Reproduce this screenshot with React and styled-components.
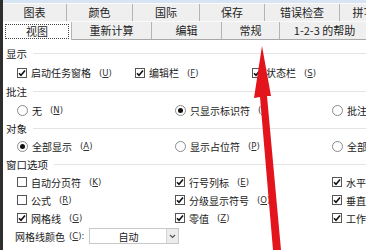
import React from "react";
import styled, { createGlobalStyle } from "styled-components";

const Global = createGlobalStyle`
  html, body { margin: 0; padding: 0; background: #fff; }
  body { font-family: "Noto Sans CJK SC", "Noto Sans", sans-serif; color: #1a1a1a; }
`;

const Window = styled.div`
  position: relative;
  display: flex;
  width: 366px;
  height: 250px;
  overflow: hidden;
  background: #fff;
`;

const LeftFrame = styled.div`
  width: 3px;
  flex: none;
  background: #2e2e2e;
`;

const Main = styled.div`
  flex: 1;
  display: flex;
  flex-direction: column;
  min-width: 0;
`;

const TopStrip = styled.div`
  height: 3px;
  background: #d6e4f3;
  border-bottom: 1px solid #fbfbfb;
`;

const TabRow = styled.div`
  display: flex;
  height: 18px;
  background: #efefef;
  border-bottom: 1px solid ${(p) => (p.$last ? "#a8a8a8" : "#fafafa")};
  box-sizing: border-box;
  white-space: nowrap;
`;

const Tab = styled.div`
  flex: none;
  width: ${(p) => p.$w}px;
  box-sizing: border-box;
  display: flex;
  align-items: center;
  justify-content: center;
  font-size: 11px;
  line-height: 1;
  color: #222;
  border-right: 1px solid #b4b4b4;
  background: ${(p) => (p.$active ? "#fff" : "transparent")};
  margin-bottom: ${(p) => (p.$active ? "-1px" : "0")};
  padding: ${(p) => (p.$active ? "0 2px" : "0")};
`;

const Focus = styled.span`
  flex: 1;
  align-self: stretch;
  margin: 2px 0 1px;
  border: 1px dotted #444;
  display: flex;
  align-items: center;
  justify-content: center;
`;

const Content = styled.div`
  display: flex;
  flex-direction: column;
  padding-top: 4px;
`;

const Section = styled.div`
  display: flex;
  align-items: center;
  height: ${(p) => p.$h}px;
  padding-left: 3px;
  font-size: 10.5px;
  color: #1a1a1a;
  &::after {
    content: "";
    flex: 1;
    height: 1px;
    margin-left: 6px;
    background: #e4e4e4;
  }
`;

const Row = styled.div`
  display: grid;
  grid-template-columns: ${(p) => p.$cols};
  align-items: center;
  height: ${(p) => p.$h}px;
  padding-left: 14px;
  white-space: nowrap;
`;

const Option = styled.label`
  display: flex;
  align-items: center;
  gap: 4px;
  font-size: 10px;
  color: #1a1a1a;
  overflow: hidden;
`;

const Key = styled.span`
  font-family: "DejaVu Sans", sans-serif;
  font-size: 8.5px;
  margin-left: 4px;
  color: #333;
  u { text-decoration: underline; }
`;

const Box = styled.span`
  flex: none;
  width: 10px;
  height: 10px;
  box-sizing: border-box;
  border: 1px solid #555;
  background: #fff;
  display: flex;
  align-items: center;
  justify-content: center;
`;

const Radio = styled.span`
  flex: none;
  width: 11px;
  height: 11px;
  box-sizing: border-box;
  border: 1px solid #8a8a8a;
  border-radius: 50%;
  background: #fff;
  display: flex;
  align-items: center;
  justify-content: center;
  &::after {
    content: "";
    width: 5px;
    height: 5px;
    border-radius: 50%;
    background: ${(p) => (p.$on ? "#111" : "transparent")};
  }
`;

const ColorRow = styled.div`
  display: flex;
  align-items: center;
  height: 18px;
  padding-left: 12px;
  font-size: 10px;
  white-space: nowrap;
`;

const Select = styled.div`
  margin-left: 5px;
  width: 90px;
  height: 16px;
  box-sizing: border-box;
  border: 1px solid #c8c8c8;
  display: flex;
  align-items: stretch;
`;

const SelectValue = styled.span`
  flex: 1;
  display: flex;
  align-items: center;
  justify-content: center;
  font-size: 10px;
`;

const SelectBtn = styled.span`
  width: 11px;
  background: #ececec;
  border-left: 1px solid #d4d4d4;
  display: flex;
  align-items: center;
  justify-content: center;
`;

const Overlay = styled.svg`
  position: absolute;
  left: 0;
  top: 0;
  pointer-events: none;
`;

const Check = () => (
  <svg width="8" height="8" viewBox="0 0 8 8">
    <path d="M1 4.2 L3 6.3 L7 1.5" fill="none" stroke="#111" strokeWidth="1.6" />
  </svg>
);

const Opt = ({ type, on, text, k }) => (
  <Option>
    {type === "radio" ? <Radio $on={on} /> : <Box>{on && <Check />}</Box>}
    <span>{text}</span>
    <Key>(<u>{k}</u>)</Key>
  </Option>
);

const row1 = [
  ["图表", 64],
  ["颜色", 66],
  ["国际", 67],
  ["保存", 65],
  ["错误检查", 75],
  ["拼写检查", 70],
];
const row2 = [
  ["视图", 69, true],
  ["重新计算", 80],
  ["编辑", 70],
  ["常规", 58],
  ["1-2-3 的帮助", 90],
];

const COLS_A = "118px 117px 1fr";
const COLS_B = "158px 157px 1fr";

export default function App() {
  return (
    <>
      <Global />
      <Window>
        <LeftFrame />
        <Main>
          <TopStrip />
          <TabRow>
            {row1.map(([t, w]) => (
              <Tab key={t} $w={w}>{t}</Tab>
            ))}
          </TabRow>
          <TabRow $last>
            {row2.map(([t, w, a]) => (
              <Tab key={t} $w={w} $active={a}>
                {a ? <Focus>{t}</Focus> : t}
              </Tab>
            ))}
          </TabRow>
          <Content>
            <Section $h={19}>显示</Section>
            <Row $h={19} $cols={COLS_A}>
              <Opt on text="启动任务窗格" k="U" />
              <Opt on text="编辑栏" k="F" />
              <Opt on text="状态栏" k="S" />
            </Row>
            <Section $h={19}>批注</Section>
            <Row $h={18} $cols={COLS_B}>
              <Opt type="radio" text="无" k="N" />
              <Opt type="radio" on text="只显示标识符" k="I" />
              <Opt type="radio" text="批注和标识符" k="D" />
            </Row>
            <Section $h={18}>对象</Section>
            <Row $h={18} $cols={COLS_B}>
              <Opt type="radio" on text="全部显示" k="A" />
              <Opt type="radio" text="显示占位符" k="P" />
              <Opt type="radio" text="全部隐藏" k="D" />
            </Row>
            <Section $h={18}>窗口选项</Section>
            <Row $h={18} $cols={COLS_B}>
              <Opt text="自动分页符" k="K" />
              <Opt on text="行号列标" k="E" />
              <Opt on text="水平滚动条" k="Z" />
            </Row>
            <Row $h={18} $cols={COLS_B}>
              <Opt text="公式" k="R" />
              <Opt on text="分级显示符号" k="O" />
              <Opt on text="垂直滚动条" k="V" />
            </Row>
            <Row $h={18} $cols={COLS_B}>
              <Opt on text="网格线" k="G" />
              <Opt on text="零值" k="Z" />
              <Opt on text="工作表标签" k="B" />
            </Row>
            <ColorRow>
              <span>网格线颜色</span>
              <Key>(<u>C</u>):</Key>
              <Select>
                <SelectValue>自动</SelectValue>
                <SelectBtn>
                  <svg width="7" height="5" viewBox="0 0 7 5">
                    <path d="M1 1 L3.5 3.5 L6 1" fill="none" stroke="#555" strokeWidth="1.2" />
                  </svg>
                </SelectBtn>
              </Select>
            </ColorRow>
          </Content>
        </Main>
        <Overlay width="366" height="250" viewBox="0 0 366 250">
          <polygon
            points="262,46 271,96 267,96 281,250 273,250 260,97 254,98"
            fill="#e3141c"
          />
        </Overlay>
      </Window>
    </>
  );
}
